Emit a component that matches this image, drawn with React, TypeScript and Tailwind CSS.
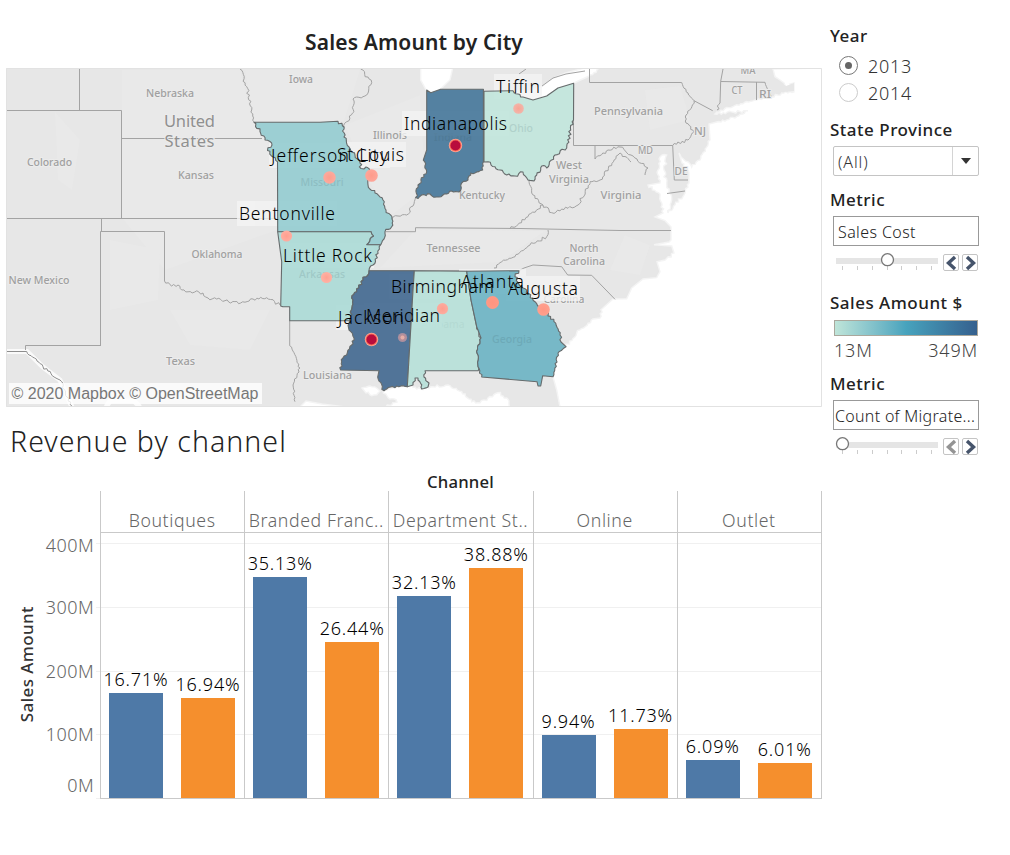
import React from "react";

/* ---------- map geometry ---------- */

// Deterministic noise in [-1, 1] for a position.
const noise = (x: number, y: number) => {
  const n = Math.sin(x * 12.9898 + y * 78.233) * 43758.5453;
  return (n - Math.floor(n)) * 2 - 1;
};

type Pt = [number, number];

// Points between a and b along a natural (river or coast) border.
const wander = (a: Pt, b: Pt): Pt[] => {
  const flip = a[0] > b[0] || (a[0] === b[0] && a[1] > b[1]);
  const [p, q] = flip ? [b, a] : [a, b];
  const dx = q[0] - p[0];
  const dy = q[1] - p[1];
  const len = Math.hypot(dx, dy) || 1;
  const steps = Math.max(1, Math.round(len / 2.1));
  const pts: Pt[] = [];
  for (let i = 1; i < steps; i++) {
    const t = i / steps;
    const d = noise(p[0] + i, p[1] - i) * 1.5;
    pts.push([p[0] + dx * t - (dy / len) * d, p[1] + dy * t + (dx / len) * d]);
  }
  if (flip) pts.reverse();
  return pts;
};

// "x,y" is reached by a straight line, "~x,y" by a natural border.
const trace = (src: string, close = false) => {
  let prev: Pt | null = null;
  let d = "";
  src.trim().split(/\s+/).forEach((tok) => {
    const natural = tok[0] === "~";
    const [x, y] = tok.replace("~", "").split(",").map(Number);
    if (!prev) d += `M${x} ${y}`;
    else {
      if (natural) wander(prev, [x, y]).forEach((p) => (d += `L${p[0].toFixed(1)} ${p[1].toFixed(1)}`));
      d += `L${x} ${y}`;
    }
    prev = [x, y];
  });
  return close ? d + "Z" : d;
};

const states = [
  { name: "Missouri", fill: "#94ccd0", d: "254,122.3 320,122.3 338,121.3 ~344,127 ~344,137 ~349,147 ~355,155 ~360,163 ~361,168.5 ~366,167 ~370,171 ~367,177 ~368,185 ~375,193 ~383,200 ~386,210 ~392,219 ~391.5,227 ~385,231.7 ~384,239 ~380.7,244.7 366.7,244.7 ~373.5,236 ~371,231.7 277.7,231.7 277.5,161.7 ~273,157 ~267.5,150.5 ~272,145 ~270,141.5 ~265,140 ~260,131.5 ~254,122.3" },
  { name: "Arkansas", fill: "#abdad6", d: "277.7,231.7 371,231.7 ~373.5,236 ~366.7,244.7 380.7,244.7 ~378,253.5 ~373,265 ~369,270.7 ~363,280 ~356.7,291.7 ~351.7,298 ~352,308 ~349.5,320.7 289.7,320.7 289.7,306.7 ~280.7,306 281.7,261.7 277.7,231.7" },
  { name: "Mississippi", fill: "#40678f", d: "369,270.7 414.3,270.7 413,290 407.3,386.7 ~396.7,386 ~386.7,389 ~384,390.7 ~377.7,377 379,370.7 340.7,370 ~343,358 ~351.7,345 ~354,338 ~349,330 ~349.5,320.7 ~352,308 ~351.7,298 ~356.7,291.7 ~363,280 ~369,270.7" },
  { name: "Alabama", fill: "#b6e0d8", d: "414.3,270.7 466.7,271.3 471,300 476.7,326.7 ~481,338 ~477.5,347 ~478.3,370.7 425,370.7 ~424,377 ~429,383 ~428,387 ~421.7,389 ~418,378 ~415,378 ~413,385 407.3,386.7 413,290" },
  { name: "Georgia", fill: "#6ab2c3", d: "466.7,271.3 519,270.7 ~515,276.7 ~523,288 ~535,301.7 ~546.7,311.7 ~554,321.7 ~560,335 ~561,342 566,346.7 ~558,353 ~557,362 ~553,376.7 542.7,375.7 540.7,386 538,386 537,381.7 481.7,377 ~478,366.7 ~477.5,347 ~481,338 476.7,326.7 471,300" },
  { name: "Indiana", fill: "#447599", d: "426.7,90 430.7,92.7 440.7,89.3 483.4,89.3 483.4,161.7 ~482.7,170 ~470.7,173 ~468,180 ~461.7,183 ~459,192 ~451.7,191 ~443,195 ~436.7,197 ~430,194 ~415.7,197.5 ~418,185 ~426.7,171.7 ~424,158 426.7,150" },
  { name: "Ohio", fill: "#c1e5dc", d: "484,91.3 513,90.7 ~523,97 533,100 546.7,96 558,88 573.7,83.3 573.5,120 ~570.7,130 ~566.7,148 ~555,155 ~546.7,168 ~541.7,166 ~536.7,175 ~534,181 ~528,180 ~523,172 ~515,176 ~506.7,175 ~495,166.7 ~488,161.7 484,162" },
];

const water = [
  "773,69 775,76.7 780,80 784,83 787,90 ~794,91 ~790,84 794,83 794,92 ~781.7,93 ~771.7,97 ~756.7,100 ~733,106.7 ~717,112 715,114 ~748,110.7 ~736.7,116.7 ~716.7,122 709,124 710,140 ~700,160 ~691.7,167 ~679,153 682,163 ~689,173 689,183 ~685,193 ~668,213 ~671.7,200 ~666.7,183 ~664,170 ~666.7,155 ~660,157 ~658,170 ~660,183 648,185 ~660,194 ~661.7,203 ~663,213 655,217 665,220.7 671,227 671,240 ~669,242 654,244.7 671.7,246 674,253 ~665,260 657,261.7 660,271.7 656.7,277.7 643,279 631.7,288 626.7,298.7 613,299 603,308 ~600,318 593,319 ~576.7,333 ~566,346.7 558,353 553,377 556.7,390 560,407 822,407 822,68",
  "386,407 ~397,402 ~387,396 ~383,391 396,387 407,386 ~421,389 ~433,386.7 ~448,385 ~461.7,391.7 ~471.7,401.7 ~480,402.7 ~488,398 ~498,392.7 ~506.7,398 ~510,407",
  "420.7,68 420.7,80 426.7,91 431.7,93.5 441.7,88 450,80 452.7,68",
  "513,91 523,97 533,100 546.7,96 558,88 574,83 587,77 ~597,70 599,68 584,68 566,73 553,78 541.7,86.7 528,91",
  "362,388 ~370,386 ~380,391 ~374,395 ~366,393",
  "300,407 306,401 322,404 345,407",
];

const borders = [
  "79.5,69 79.5,110.5", "6.5,110.5 121.5,110.5 121.5,219", "121.5,138.5 262,138.5", "6.5,218.5 277,218.5",
  "101.5,218.5 101.5,231.5", "100.5,346 100.5,231.5 164.5,231.5 164.5,281", "100.5,345.5 25.5,345.5 25.5,350",
  "164.5,281 ~171.7,286 ~178,285 ~181.7,290 ~203,293 ~208,298 ~225,300.7 ~240.7,303 ~253,299 ~266.7,297.7 ~280,305",
  "240,69 ~246.7,86.7 ~251.7,110 ~254,122",
  "360.7,69 ~371.7,82.7 ~366.7,95 ~353,99 ~354,111.7 ~346.7,121.7 ~344,128",
  "415.7,197 ~413,206 ~406.7,215 ~398,216 ~392,219",
  "386,231.7 415.5,231.7 415.5,227.7 520,228.5 620,230.5 671,230.5",
  "510,229 ~528,216.7 ~543,205", "529,180 ~531.7,193 ~543,205 ~551.7,212.7 ~578,205 ~590,181.7 ~600,180 ~618,155 ~620,153 ~631,162",
  "589.5,69 589.5,82.5 681.7,82.5 ~688,93 ~694,100.7 712.7,110.7", "694,100.7 ~686,115 ~686,123 ~694,131.7 ~688,140 ~672.7,145.5",
  "573.5,83 573.5,145.5 672.7,145.5 674.3,180 688,180", "595,145.3 595,159 ~608,150 ~620,147 ~631,155 ~637,159 ~648,168 ~645,175",
  "667,193.5 685,191", "723,69 720.7,81.3 720,103 ~717,110", "720.7,81.5 765,82.3 ~771,96.7", "756.5,82 756.5,100",
  "494,268 ~500,262.7 ~515,256.7 ~530,245 ~546.7,236.7 ~548,230", "369,270.7 519,270.7 524,268 533,265 561.7,266.7 567.7,275 591.7,275.3 615,299.3",
  "289.7,320.7 289.7,345.7 ~300,368 ~293,385 ~295,401.7", "542,86 553,78 566,74 585,71", "519,74 526,69",
];

const places: [string, number, number, number][] = [
  ["Nebraska", 170, 97, 48], ["Iowa", 301, 83, 24], ["Colorado", 49.5, 166, 45], ["Kansas", 196, 179, 36],
  ["Oklahoma", 217, 258, 51], ["New Mexico", 39, 284, 61], ["Texas", 180.5, 365, 29], ["Missouri", 322, 186, 43],
  ["Illinois", 390, 139, 34], ["Indiana", 453, 141, 38], ["Ohio", 521, 132, 24], ["Kentucky", 482, 198.5, 46],
  ["West", 569, 169, 26], ["Virginia", 569, 182.5, 40], ["Virginia", 621, 199, 41], ["Pennsylvania", 628.5, 115, 69],
  ["Tennessee", 453.5, 252, 54], ["North", 584, 252, 29], ["Carolina", 584, 265, 42], ["Carolina", 564, 303, 41],
  ["Arkansas", 322, 278, 46], ["Alabama", 443, 328, 43], ["Georgia", 512, 343, 40], ["Louisiana", 327.5, 379, 49],
  ["MA", 748, 73.5, 15], ["CT", 737, 94, 11], ["RI", 765, 97.5, 12], ["NJ", 700, 134.5, 12], ["MD", 645.5, 154, 15], ["DE", 681, 175, 13],
];

type City = { name: string; x: number; y: number; w: number; cx: number; cy: number; r: number; fill: string; ring?: string };
const cities: City[] = [
  { name: "Tiffin", x: 496, y: 93, w: 44, cx: 518.5, cy: 108.5, r: 5.3, fill: "#f3b4a8" },
  { name: "Indianapolis", x: 404, y: 130, w: 103, cx: 455.5, cy: 145.5, r: 5, fill: "#b80d3c", ring: "#fa6b58" },
  { name: "Jefferson City", x: 271, y: 162, w: 117, cx: 329.5, cy: 177.5, r: 6.2, fill: "#fda99c" },
  { name: "St Louis", x: 337, y: 161, w: 67, cx: 371.5, cy: 175.5, r: 6.3, fill: "#fea598" },
  { name: "Bentonville", x: 239, y: 220, w: 96, cx: 286.5, cy: 236, r: 5.6, fill: "#ffac9f" },
  { name: "Little Rock", x: 283, y: 262, w: 89, cx: 326.5, cy: 277.5, r: 5.6, fill: "#feb0a3" },
  { name: "Birmingham", x: 391, y: 293, w: 103, cx: 442.5, cy: 308.7, r: 5.6, fill: "#fdaa9d" },
  { name: "Atlanta", x: 461, y: 288, w: 63, cx: 492.5, cy: 302.5, r: 6.5, fill: "#ff9985" },
  { name: "Augusta", x: 508, y: 295, w: 70, cx: 543.5, cy: 309.5, r: 6.3, fill: "#ff9f8d" },
  { name: "Jackson", x: 338, y: 324, w: 66, cx: 371.5, cy: 339.5, r: 5, fill: "#b80d3c", ring: "#fa6b58" },
  { name: "Meridian", x: 366, y: 322, w: 74, cx: 402.5, cy: 337.5, r: 4.6, fill: "#a98f9f" },
];

function SalesMap() {
  return (
    <svg viewBox="6 68 816 339" className="block h-[339px] w-[816px]" fontFamily="'Noto Sans', sans-serif">
      <defs>
        <radialGradient id="glow">
          <stop offset="0" stopColor="#ff8d78" stopOpacity=".8" />
          <stop offset="1" stopColor="#ff8d78" stopOpacity="0" />
        </radialGradient>
      </defs>
      <rect x="6" y="68" width="816" height="339" fill="#e7e7e7" />
      <g fill="#ebebeb" opacity=".5">
        <path d="M122 70L240 70L253 120L278 160L277 230L165 270L122 218Z" />
        <path d="M55 112L80 140L72 190L58 180Z M110 240L160 250L158 300L110 310Z M245 70L360 70L344 121L254 121Z" />
        <path d="M345 125L420 95L424 160L415 197L392 215L368 180Z M170 310L270 310L250 350L190 345Z" />
        <path d="M415 230L545 231L500 262L380 268Z M625 235L650 245L640 275L610 270Z M645 90L680 86L690 120L650 130Z" />
      </g>
      <path d="M6 351.5H27L43 367L60 380L72 407 M106 407L110 401H134L140 407" fill="none" stroke="#fafafa" strokeWidth="5" />
      {water.map((w) => (
        <path key={w} d={trace(w, true)} fill="#fff" stroke="#f4f4f4" strokeWidth="1.4" />
      ))}
      <path d="M777 80L786 86L794 83L794 91L783 92Z" fill="#e7e7e7" />
      <g fill="none" stroke="#a3a3a3" strokeWidth="1">
        {borders.map((b) => (
          <path key={b} d={trace(b)} />
        ))}
        <path d={trace("6.5,351.5 26.7,351.5 ~43,366.7 ~60,380 ~71.7,406")} stroke="#8e8e8e" />
      </g>
      <g fontSize="11" fontWeight="500" fill="#a0a0a0" stroke="#ececec" strokeWidth="2" paintOrder="stroke" textAnchor="middle">
        {places.map(([name, x, y, w]) => (
          <text key={name + x} x={x} y={y} textLength={w} lengthAdjust="spacingAndGlyphs">{name}</text>
        ))}
        <g fontSize="16.5" fontWeight="400" fill="#909090">
          <text x="189.5" y="127" textLength="51">United</text>
          <text x="189.5" y="147" textLength="50">States</text>
        </g>
      </g>
      <g fill="#f4f4f4" opacity=".8">
        {cities.map((c) => (
          <rect key={c.name} x={c.x - 2} y={c.y - 19} width={c.w + 4} height="25" />
        ))}
      </g>
      {states.map((s) => (
        <path key={s.name} d={trace(s.d, true)} fill={s.fill} fillOpacity=".9" stroke="#666b6c" strokeWidth="1.1" strokeLinejoin="round" />
      ))}
      <g fontSize="11" fontWeight="500" fill="#607f88" textAnchor="middle" opacity=".14">
        {places.filter(([n]) => ["Missouri", "Arkansas", "Ohio", "Indiana", "Georgia"].includes(n)).map(([name, x, y, w]) => (
          <text key={name} x={x} y={y} textLength={w} lengthAdjust="spacingAndGlyphs">{name}</text>
        ))}
      </g>
      {cities.map((c) => (
        <g key={c.name}>
          {c.ring ? (
            <>
              <circle cx={c.cx} cy={c.cy} r="6.7" fill="#ffa896" />
              <circle cx={c.cx} cy={c.cy} r="5.9" fill={c.ring} />
              <circle cx={c.cx} cy={c.cy} r={c.r} fill={c.fill} />
            </>
          ) : (
            <>
              <circle cx={c.cx} cy={c.cy} r={c.r} fill={c.fill} />
              <circle cx={c.cx} cy={c.cy} r={c.r - 0.5} fill="url(#glow)" opacity=".5" />
              {c.name === "Meridian" && <circle cx={c.cx} cy={c.cy} r="2" fill="#e5afa8" />}
            </>
          )}
        </g>
      ))}
      <g fontSize="17.5" fontWeight="300" fill="#000">
        {cities.map((c) => (
          <text key={c.name} x={c.x} y={c.y} textLength={c.w}>{c.name}</text>
        ))}
      </g>
      <rect x="9" y="383" width="253" height="21" fill="#fff" opacity=".8" />
      <text x="11.5" y="399" fontSize="16" fill="#777" fontFamily="'Liberation Sans', sans-serif" textLength="247">© 2020 Mapbox © OpenStreetMap</text>
      <path d="M6.5 68.5H821.5V406.5H6.5Z" fill="none" stroke="#e2e2e2" />
    </svg>
  );
}

/* ---------- bar chart ---------- */

const channels = [
  { name: "Boutiques", bars: [{ pct: "16.71%", h: 105 }, { pct: "16.94%", h: 100 }] },
  { name: "Branded Franc..", bars: [{ pct: "35.13%", h: 221 }, { pct: "26.44%", h: 156 }] },
  { name: "Department St..", bars: [{ pct: "32.13%", h: 202 }, { pct: "38.88%", h: 230 }] },
  { name: "Online", bars: [{ pct: "9.94%", h: 63 }, { pct: "11.73%", h: 69 }] },
  { name: "Outlet", bars: [{ pct: "6.09%", h: 38 }, { pct: "6.01%", h: 35 }] },
];

function RevenueChart() {
  return (
    <div className="flex h-[308px]">
      <div className="flex w-[42px] items-end justify-center pb-[77px] pl-[11px]">
        <span className="rotate-180 whitespace-nowrap text-[17px] leading-none font-medium tracking-[0.4px] text-[#333] [writing-mode:vertical-rl]">
          Sales Amount
        </span>
      </div>
      <div className="flex w-[54px] flex-col pt-[42px] pr-[2px] text-right text-[18px] leading-[24px] font-light tracking-[0.4px] text-[#666]">
        <span className="h-[62px]">400M</span>
        <span className="h-[64px]">300M</span>
        <span className="h-[63px]">200M</span>
        <span className="h-[51px]">100M</span>
        <span>0M</span>
      </div>
      <div className="grid w-[726px]">
        <div className="flex flex-col pt-[52px] [grid-area:1/1]">
          <div className="h-16 border-t border-[#f0f0f0]" />
          <div className="h-16 border-t border-[#f0f0f0]" />
          <div className="h-[63px] border-t border-[#f0f0f0]" />
          <div className="h-16 border-t border-[#f0f0f0]" />
          <div className="border-t border-[#f0f0f0]" />
        </div>
        <div className="ml-1 flex border-r border-[#c9c9c9] [grid-area:1/1]">
          {channels.map((c) => (
            <div key={c.name} className="flex min-w-0 flex-1 flex-col border-l border-[#c9c9c9]">
              <div className="flex h-[42px] items-end justify-center border-b border-[#c9c9c9] pr-px pb-px text-[17.7px] leading-[22px] font-light tracking-[0.6px] whitespace-nowrap text-[#666]">
                {c.name}
              </div>
              <div className="flex flex-1 items-end justify-center gap-[18px] border-b border-[#c9c9c9] pr-[1.4px]">
                {c.bars.map((b, i) => (
                  <div key={b.pct} className="flex w-[54px] flex-col items-center">
                    <span className="mb-px text-[18px] leading-[25px] font-light tracking-[0.8px] whitespace-nowrap text-black">{b.pct}</span>
                    <div className={i ? "w-full bg-[#f58f2d]" : "w-full bg-[#4e79a7]"} style={{ height: b.h }} />
                  </div>
                ))}
              </div>
            </div>
          ))}
        </div>
      </div>
    </div>
  );
}

/* ---------- side panel ---------- */

function Heading({ children }: { children: React.ReactNode }) {
  return <h3 className="h-6 text-[17px] leading-6 font-medium tracking-[0.5px] whitespace-nowrap text-[#222]">{children}</h3>;
}

function Radio({ label, on }: { label: string; on?: boolean }) {
  return (
    <label className="flex h-[27px] items-center">
      <span className={`ml-[9px] flex size-[19px] items-center justify-center rounded-full border ${on ? "border-[#777]" : "border-[#ccc]"}`}>
        {on && <span className="size-[7px] rounded-full bg-[#666]" />}
      </span>
      <span className="ml-[10px] text-[18px] leading-[26px] font-light tracking-[0.7px] text-[#333]">{label}</span>
    </label>
  );
}

function Arrow({ left, muted }: { left?: boolean; muted?: boolean }) {
  return (
    <svg viewBox="0 0 16 17" className="h-[17px] w-4">
      <rect x=".5" y=".5" width="15" height="16" rx="1.5" fill="#fff" stroke="#c4c4c4" />
      <path d={left ? "M12 3L5.5 9L12 15" : "M5 3L11.5 9L5 15"} fill="none" stroke={muted ? "#949494" : "#46546b"} strokeWidth="3.4" />
    </svg>
  );
}

function Stepper({ at, muted }: { at: number; muted?: boolean }) {
  return (
    <div className="ml-[5px] flex h-[20px] items-start">
      <svg viewBox="0 0 104 20" className="h-5 w-[104px]">
        <rect x="1" y="6" width="102" height="6" fill="#e5e5e5" />
        <path d="M7.5 14V18M22.5 14V18M37.5 14V18M52.5 14V18M66.5 14V18M81.5 14V18M96.5 14V18" stroke="#ccc" />
        <circle cx={at} cy="7.7" r="6" fill="#fff" stroke="#777" strokeWidth="1.3" />
      </svg>
      <div className="mt-[2px] ml-1 flex gap-[3px]">
        <Arrow left muted={muted} />
        <Arrow />
      </div>
    </div>
  );
}

function SidePanel() {
  return (
    <aside className="flex w-[150px] flex-col pt-6">
      <Heading>Year</Heading>
      <div className="mt-[4px]">
        <Radio label="2013" on />
        <Radio label="2014" />
      </div>
      <div className="mt-[12px]"><Heading>State Province</Heading></div>
      <div className="mt-[4px] ml-[3px] flex h-[30px] w-[146px] rounded-[2px] border border-[#c4c4c4]">
        <span className="flex-1 pl-1 text-[16px] leading-[30px] font-light tracking-[0.9px] text-[#333]">(All)</span>
        <span className="flex w-[26px] items-center justify-center border-l border-[#d4d4d4]">
          <svg viewBox="0 0 10 6" className="h-[6px] w-[10px]"><path d="M0 0H10L5 6Z" fill="#333" /></svg>
        </span>
      </div>
      <div className="mt-3"><Heading>Metric</Heading></div>
      <div className="mt-1 ml-[3px] h-[30px] w-[146px] border border-[#999] pl-1 text-[16px] leading-[30px] font-light tracking-[0.4px] whitespace-nowrap text-[#222]">Sales Cost</div>
      <div className="mt-[6px]"><Stepper at={52.5} /></div>
      <div className="mt-[19px]"><Heading>Sales Amount $</Heading></div>
      <div className="mt-[5px] ml-1 h-4 w-36 border border-[#aaa79c] bg-linear-to-r from-[#bfe5d9] via-[#47a3bd] to-[#35608e]" />
      <div className="mt-px ml-1 flex w-36 justify-between text-[18px] leading-[26px] font-light tracking-[0.8px] text-[#444]">
        <span>13M</span>
        <span>349M</span>
      </div>
      <div className="mt-[9px]"><Heading>Metric</Heading></div>
      <div className="mt-1 ml-[3px] h-[30px] w-[146px] border border-[#999] pl-px text-[16px] leading-[30px] font-light tracking-[0.3px] whitespace-nowrap text-[#222]">Count of Migrate...</div>
      <div className="mt-[6px]"><Stepper at={7.5} muted /></div>
    </aside>
  );
}

export default function App() {
  return (
    <div className="flex h-[855px] w-[1010px] overflow-hidden bg-white font-['Noto_Sans',sans-serif]">
      <main className="flex w-[830px] flex-col">
        <h1 className="h-[68px] w-[828px] pt-[27px] text-center text-[21px] leading-[30px] font-semibold tracking-[0.15px] text-[#222]">Sales Amount by City</h1>
        <div className="ml-[6px]">
          <SalesMap />
        </div>
        <h2 className="mt-[15px] ml-[10px] h-[40px] text-[28.5px] leading-[38px] font-light tracking-[1.05px] text-[#222]">Revenue by channel</h2>
        <div className="h-[29px] w-[921px] pt-[9px] text-center text-[16.7px] leading-[22px] font-medium tracking-[0.2px] text-[#222]">Channel</div>
        <RevenueChart />
      </main>
      <SidePanel />
    </div>
  );
}
